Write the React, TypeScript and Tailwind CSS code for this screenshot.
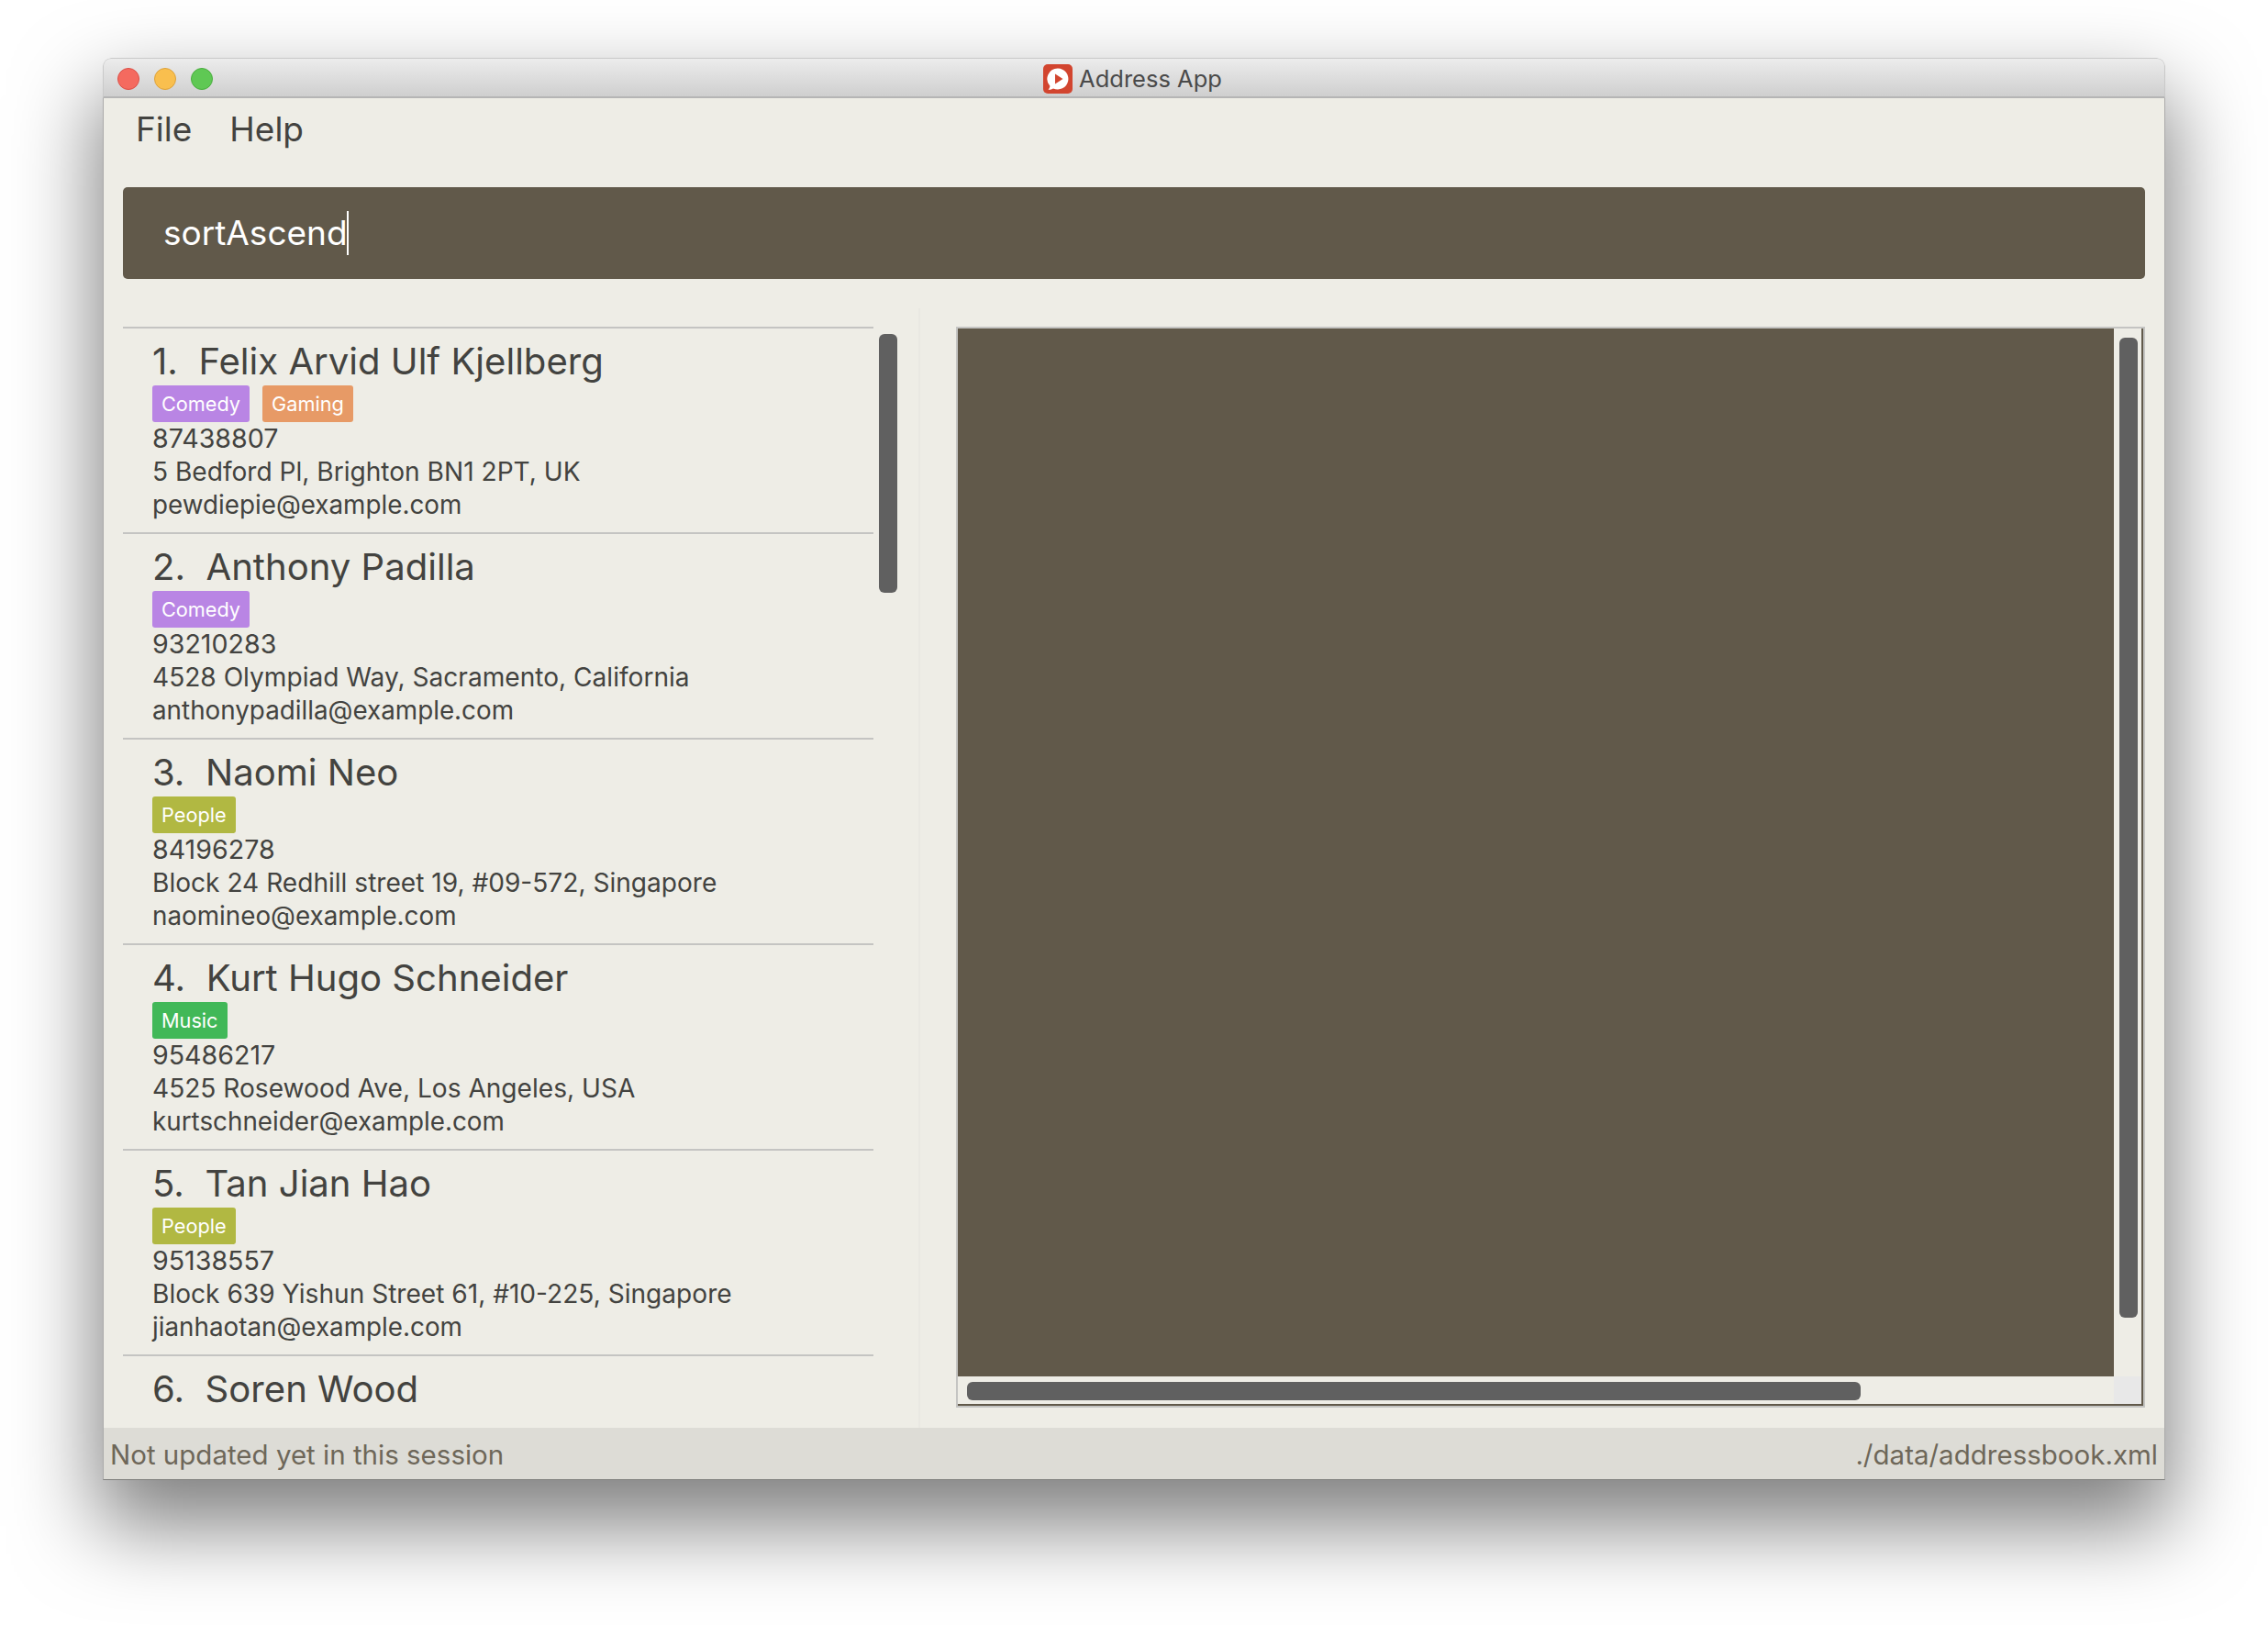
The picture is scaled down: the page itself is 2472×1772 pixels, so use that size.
import React from "react";

type Person = {
  name: string;
  tags: { label: string; color: string }[];
  phone: string;
  address: string;
  email: string;
};

const comedy = { label: "Comedy", color: "bg-[#b985e4]" };
const gaming = { label: "Gaming", color: "bg-[#e79a66]" };
const people = { label: "People", color: "bg-[#b1b842]" };
const music = { label: "Music", color: "bg-[#41b858]" };

const persons: Person[] = [
  {
    name: "1.  Felix Arvid Ulf Kjellberg",
    tags: [comedy, gaming],
    phone: "87438807",
    address: "5 Bedford Pl, Brighton BN1 2PT, UK",
    email: "pewdiepie@example.com",
  },
  {
    name: "2.  Anthony Padilla",
    tags: [comedy],
    phone: "93210283",
    address: "4528 Olympiad Way, Sacramento, California",
    email: "anthonypadilla@example.com",
  },
  {
    name: "3.  Naomi Neo",
    tags: [people],
    phone: "84196278",
    address: "Block 24 Redhill street 19, #09-572, Singapore",
    email: "naomineo@example.com",
  },
  {
    name: "4.  Kurt Hugo Schneider",
    tags: [music],
    phone: "95486217",
    address: "4525 Rosewood Ave, Los Angeles, USA",
    email: "kurtschneider@example.com",
  },
  {
    name: "5.  Tan Jian Hao",
    tags: [people],
    phone: "95138557",
    address: "Block 639 Yishun Street 61, #10-225, Singapore",
    email: "jianhaotan@example.com",
  },
];

function AppIcon() {
  return (
    <svg width="32" height="32" viewBox="0 0 32 32">
      <rect width="32" height="32" rx="5" fill="#d2452f" />
      <path d="M16 4.500a11.500 11.500 0 1 1-5 21.900c-1.600 1-3.400 1.500-5.500 1.400 1-1.100 1.700-2.500 1.900-4.100A11.500 11.500 0 0 1 16 4.500z" fill="#fff" />
      <path d="M13 10.500l8.500 5.500-8.500 5.500z" fill="#d2452f" />
    </svg>
  );
}

function PersonCard({ person }: { person: Person }) {
  return (
    <div className="h-[224px] border-t-2 border-[#c4c4c2] pl-[32px] text-[#434340]">
      <div className="h-[62px] pt-[12px] text-[40.1px] leading-[48px] whitespace-pre">{person.name}</div>
      <div className="flex h-[40px] gap-[14px]">
        {person.tags.map((tag) => (
          <span
            key={tag.label}
            className={`${tag.color} flex items-center rounded-[3px] px-[10px] pt-[1px] text-[21.7px] leading-none text-white`}
          >
            {tag.label}
          </span>
        ))}
      </div>
      <div className="text-[28.6px] leading-[36px]">{person.phone}</div>
      <div className="text-[28.1px] leading-[36px]">{person.address}</div>
      <div className="text-[27.8px] leading-[36px]">{person.email}</div>
    </div>
  );
}

export default function App() {
  return (
    <div className="h-[1772px] w-[2472px] overflow-hidden bg-white pl-[112px] pt-[63px] font-['Inter','Liberation_Sans',sans-serif]">
      <div className="flex h-[1550px] w-[2248px] flex-col overflow-hidden rounded-t-[9px] shadow-[0_44px_90px_6px_rgba(0,0,0,0.5)]">
        <div className="grid h-[44px] shrink-0 grid-cols-[1fr_auto_1fr] items-center rounded-t-[9px] border-x border-t border-b-2 border-t-[#c9c9c9] border-x-[#c9c9c9] border-b-[#b5b5b5] bg-gradient-to-b from-[#ececec] to-[#cfcfcf]">
          <div className="flex gap-[16px] pl-[15px] pt-[2px]">
            <span className="h-[24px] w-[24px] rounded-full border border-[#dc4f46] bg-[#f46a5f]" />
            <span className="h-[24px] w-[24px] rounded-full border border-[#dda23b] bg-[#f9bf4e]" />
            <span className="h-[24px] w-[24px] rounded-full border border-[#4aae3f] bg-[#5fc854]" />
          </div>
          <div className="flex items-center gap-[7px] pr-[3px] pt-[3px] text-[25.5px] leading-none text-[#4a4a4a]">
            <AppIcon />
            <span>Address App</span>
          </div>
          <div />
        </div>

        <div className="flex min-h-0 flex-1 flex-col border-x border-b border-x-[#ababab] border-b-[#7d7d7b] bg-[#eeede6]">
          <div className="flex h-[97px] shrink-0 gap-[41px] pl-[35px] pt-[12px] text-[37px] leading-[44px] text-[#434340]">
            <span>File</span>
            <span>Help</span>
          </div>

          <div className="mx-[21px] flex h-[100px] shrink-0 items-center rounded-[5px] bg-[#61594a] pl-[44px] text-[37px] text-white">
            <span>sortAscend</span>
            <span className="-ml-[1px] h-[48px] w-[2px] bg-white" />
          </div>

          <div className="mt-[32px] flex min-h-0 flex-1 pl-[21px] pr-[21px]">
            <div className="flex w-[869px] shrink-0 border-r-2 border-[#e9e8e2] pt-[20px]">
              <div className="h-full w-[818px] shrink-0 overflow-hidden">
                {persons.map((person) => (
                  <PersonCard key={person.name} person={person} />
                ))}
                <div className="border-t-2 border-[#c4c4c2] pl-[32px] pt-[12px] text-[40.1px] leading-[48px] whitespace-pre text-[#434340]">
                  6.  Soren Wood
                </div>
              </div>
              <div className="ml-[6px] mt-[8px] h-[282px] w-[20px] rounded-[6px] bg-[#606060]" />
            </div>

            <div className="ml-[39px] mt-[20px] flex h-[1178px] min-w-0 flex-1 flex-col border-2 border-[#c4c4c2]">
              <div className="flex min-h-0 flex-1">
                <div className="flex-1 bg-[#61594a]" />
                <div className="w-[32px] border-r-2 border-[#61594a] pl-[6px] pt-[10px]">
                  <div className="h-[1068px] w-[20px] rounded-[6px] bg-[#606060]" />
                </div>
              </div>
              <div className="flex h-[32px] shrink-0 border-b-2 border-[#61594a]">
                <div className="flex-1 pl-[10px] pt-[6px]">
                  <div className="h-[20px] w-[974px] rounded-[6px] bg-[#606060]" />
                </div>
                <div className="w-[32px] border-r-2 border-[#61594a] bg-[#e8e8e8]" />
              </div>
            </div>
          </div>

          <div className="flex h-[56px] shrink-0 items-center justify-between bg-[#dddcd6] px-[7px] pt-[3px] text-[29.5px] text-[#6e6759]">
            <span>Not updated yet in this session</span>
            <span>./data/addressbook.xml</span>
          </div>
        </div>
      </div>
    </div>
  );
}
